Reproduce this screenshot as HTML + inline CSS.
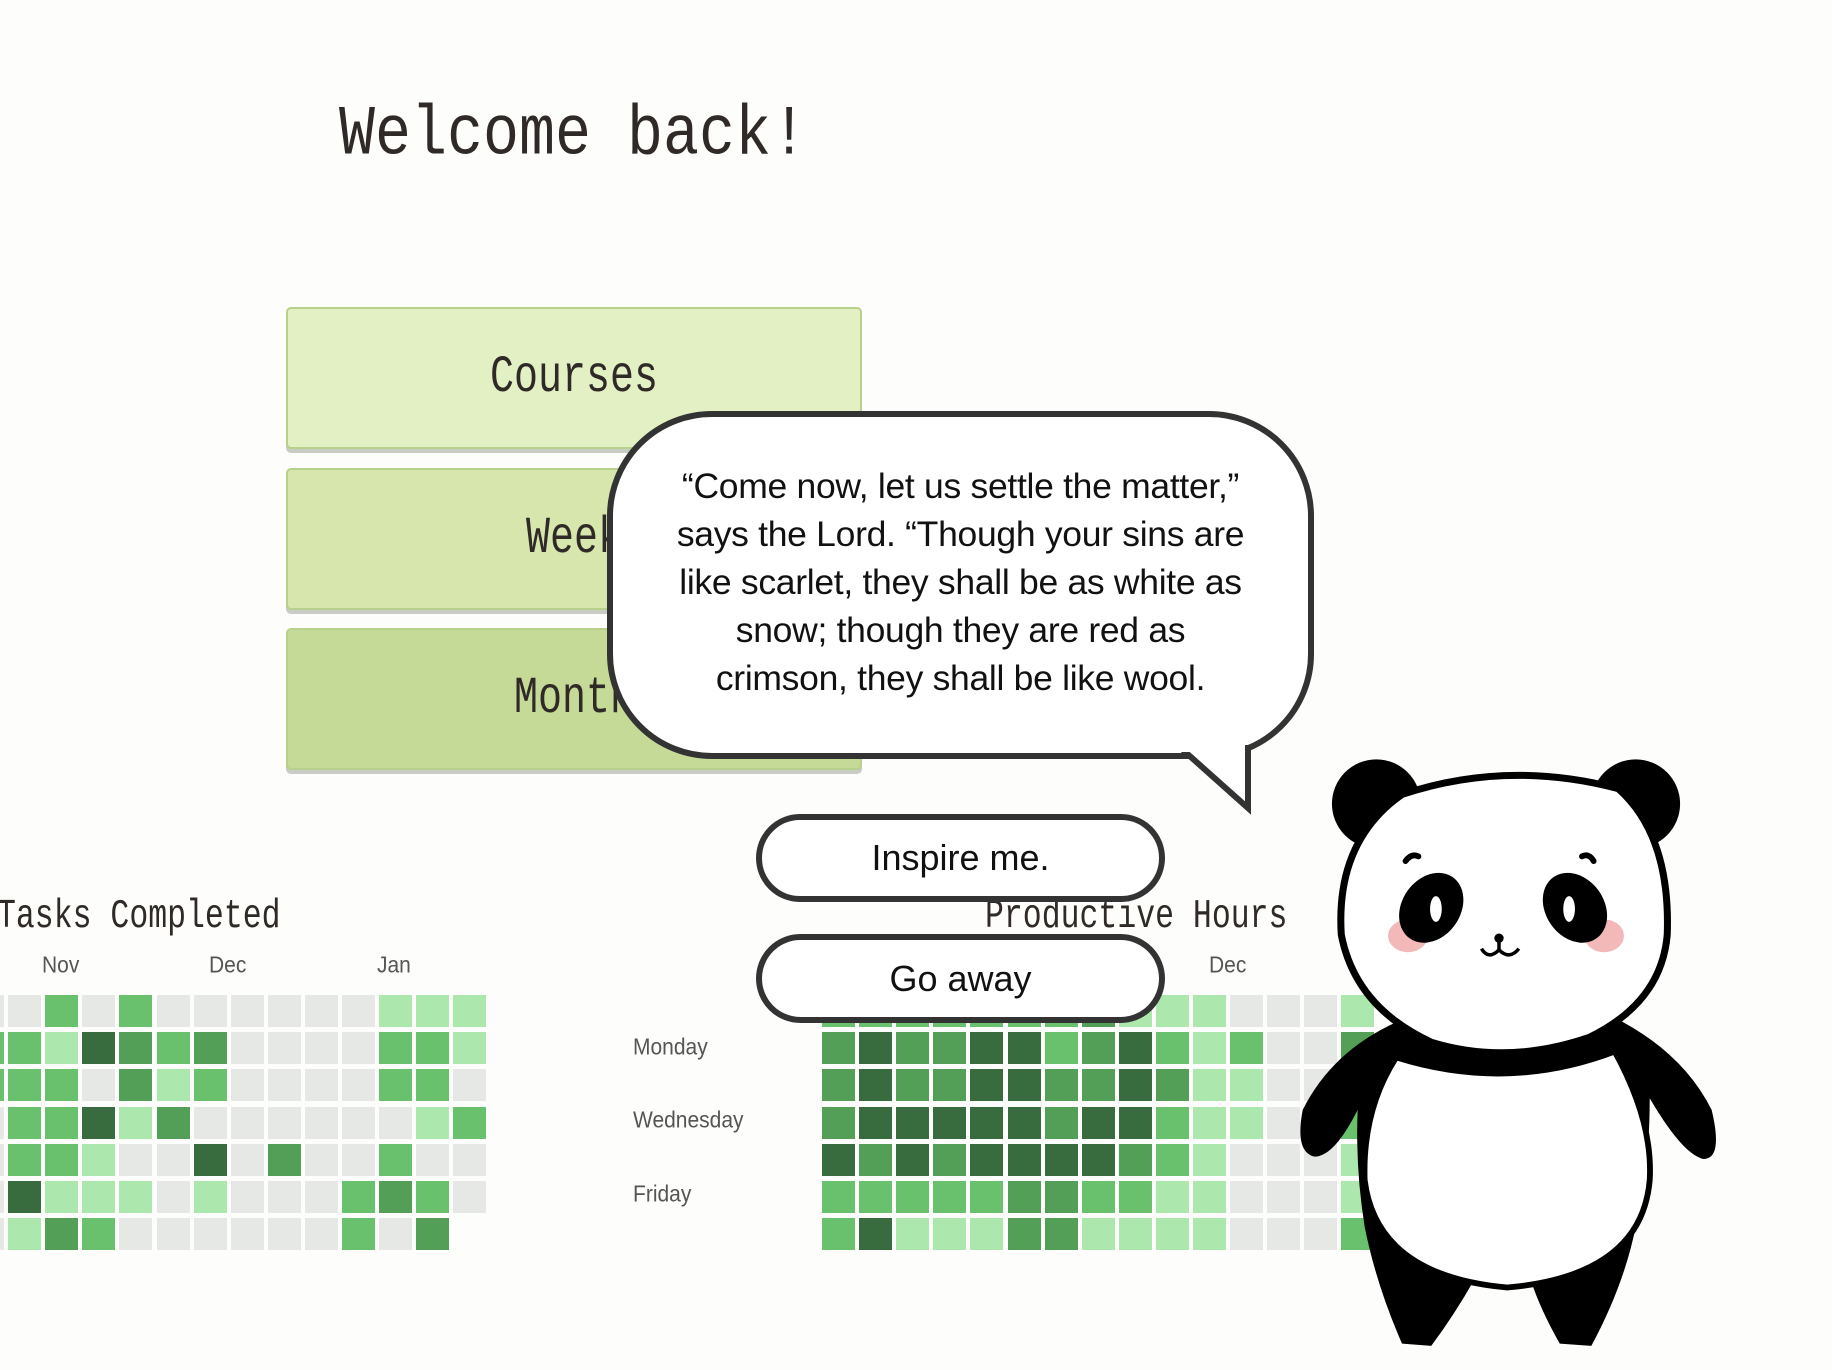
<!DOCTYPE html>
<html><head><meta charset="utf-8"><style>
html,body{margin:0;padding:0}
body{width:1832px;height:1370px;position:relative;overflow:hidden;background:#fdfdfb;font-family:"Liberation Sans",sans-serif}
.abs{position:absolute}
.mono{font-family:"Liberation Mono",monospace;color:#2f2a27;transform-origin:left center;white-space:nowrap}
.btn{position:absolute;left:286px;width:572px;height:138px;border:2px solid #b7d18c;border-radius:5px;box-shadow:0 4px 0 #c9ccc4;}
.btn span{position:absolute;left:0;right:0;top:0;bottom:0;display:flex;align-items:center;justify-content:center;font-family:"Liberation Mono",monospace;font-size:40px;color:#2f2a27;transform:scaleY(1.3)}
.cell{position:absolute;width:33px;height:32px}
.lbl{position:absolute;font-size:21px;color:#555;transform:scaleY(1.1)}
.pill{position:absolute;left:756px;width:397px;border:6px solid #333;border-radius:46px;background:#fff;display:flex;align-items:center;justify-content:center;font-size:36px;color:#111}
</style></head><body>
<div class="abs mono" style="left:339px;top:100px;font-size:60px;line-height:72px;transform:scaleY(1.18)">Welcome back!</div>

<div class="btn" style="top:307px;background:#e3f0c4"><span>Courses</span></div>
<div class="btn" style="top:468px;background:#d6e6ad"><span>Week</span></div>
<div class="btn" style="top:628px;background:#c6da98"><span>Month</span></div>

<div class="abs mono" style="left:-3px;top:900px;font-size:31.5px;line-height:36px;transform:scaleY(1.3)">Tasks Completed</div>
<div class="lbl" style="left:42px;top:954px">Nov</div>
<div class="lbl" style="left:209px;top:954px">Dec</div>
<div class="lbl" style="left:377px;top:954px">Jan</div>
<div class="lbl" style="left:633px;top:1036px">Monday</div>
<div class="lbl" style="left:633px;top:1109px">Wednesday</div>
<div class="lbl" style="left:633px;top:1183px">Friday</div>
<div class="lbl" style="left:1209px;top:954px">Dec</div>

<div id="g1"></div><div id="g2"></div>
<script>
var C={g:'#e6e8e6',l:'#ace8ae',m:'#69c16d',d:'#549f58',k:'#386c3e',_:''};
function grid(rows,x0,y0){var h='';rows.forEach(function(r,i){r.split(' ').forEach(function(c,j){if(C[c])h+='<div class="cell" style="left:'+(x0+j*37.1).toFixed(1)+'px;top:'+(y0+i*37.2).toFixed(1)+'px;background:'+C[c]+'"></div>';});});return h;}
document.getElementById('g1').innerHTML=grid([
'g g m g m g g g g g g l l l',
'm m l k d m d g g g g m m l',
'm m m g d l m g g g g m m g',
'g m m k l d g g g g g g l m',
'g m m l g g k g d g g m g g',
'g k l l l g l g g g m d m g',
'g l d m g g g g g g m g d _'],-29,995);
document.getElementById('g2').innerHTML=grid([
'm m m m m m m d l l l g g g l',
'd k d d k k m d k m l m g g d',
'd k d d k k d d k d l l g g g',
'd k k k k k d k k m l l g g m',
'k d k d k k k k d m l g g g l',
'm m m m m d d m m l l g g g l',
'm k l l l d d l l l l g g g m'],822,995);
</script>

<div class="abs mono" style="left:985px;top:900px;font-size:31.5px;line-height:36px;transform:scaleY(1.3)">Productive Hours</div>

<div class="abs" style="left:607px;top:411px;width:695px;height:336px;border:6px solid #333;border-radius:105px;background:#fff"></div>
<svg class="abs" style="left:0;top:0" width="1832" height="1370">
<path d="M1183,750 L1248,808 L1248,745" fill="#fff" stroke="#333" stroke-width="6" stroke-linejoin="miter"/>
<rect x="1180" y="740" width="64" height="12" fill="#fff"/>
</svg>
<div class="abs" style="left:600px;top:462px;width:721px;text-align:center;font-size:35.5px;line-height:48px;color:#111;letter-spacing:-0.3px">“Come now, let us settle the matter,”<br>says the Lord. “Though your sins are<br>like scarlet, they shall be as white as<br>snow; though they are red as<br>crimson, they shall be like wool.</div>

<div class="pill" style="top:814px;height:76px">Inspire me.</div>
<div class="pill" style="top:934px;height:77px">Go away</div>

<svg class="abs" style="left:0;top:0" width="1832" height="1370" viewBox="0 0 1568 1172.6">
<circle cx="1178" cy="688" r="38" fill="#000"/>
<circle cx="1400" cy="688" r="38" fill="#000"/>
<path d="M1195,875 Q1290,905 1380,870 Q1440,900 1465,950 Q1475,992 1458,992 Q1440,988 1412,940 Q1412,1000 1400,1050 Q1390,1100 1362,1152 L1335,1150 Q1318,1120 1310,1095 L1262,1095 Q1245,1125 1225,1152 L1200,1150 Q1178,1100 1168,1050 Q1160,1000 1162,950 Q1142,990 1125,990 Q1108,986 1115,950 Q1140,900 1195,875 Z" fill="#000"/>
<path d="M1195,905 Q1290,935 1382,900 Q1415,960 1412,1010 Q1405,1092 1290,1102 Q1178,1092 1168,1010 Q1166,950 1195,905 Z" fill="#fff" stroke="#000" stroke-width="5"/>
<path d="M1200,680 Q1290,650 1385,675 Q1430,715 1427,800 Q1422,858 1360,888 Q1290,912 1225,892 Q1160,862 1148,800 Q1143,720 1200,680 Z" fill="#fff" stroke="#000" stroke-width="6"/>
<ellipse cx="1205" cy="801" rx="17" ry="14" fill="#f3b9b9"/>
<ellipse cx="1373" cy="801" rx="17" ry="14" fill="#f3b9b9"/>
<ellipse cx="1225" cy="777" rx="25" ry="32" transform="rotate(35 1225 777)" fill="#000"/>
<ellipse cx="1348" cy="777" rx="25" ry="32" transform="rotate(-35 1348 777)" fill="#000"/>
<ellipse cx="1229" cy="778" rx="5" ry="11" fill="#fff"/>
<ellipse cx="1343" cy="778" rx="5" ry="11" fill="#fff"/>
<path d="M1203,737 Q1208,730 1214,733" stroke="#000" stroke-width="5" fill="none" stroke-linecap="round"/>
<path d="M1354,733 Q1360,730 1364,737" stroke="#000" stroke-width="5" fill="none" stroke-linecap="round"/>
<circle cx="1283" cy="803" r="4" fill="#000"/>
<path d="M1268,812 Q1274,822 1283,813 Q1292,822 1300,812 M1283,803 L1283,813" stroke="#000" stroke-width="3" fill="none"/>
</svg>
</body></html>
